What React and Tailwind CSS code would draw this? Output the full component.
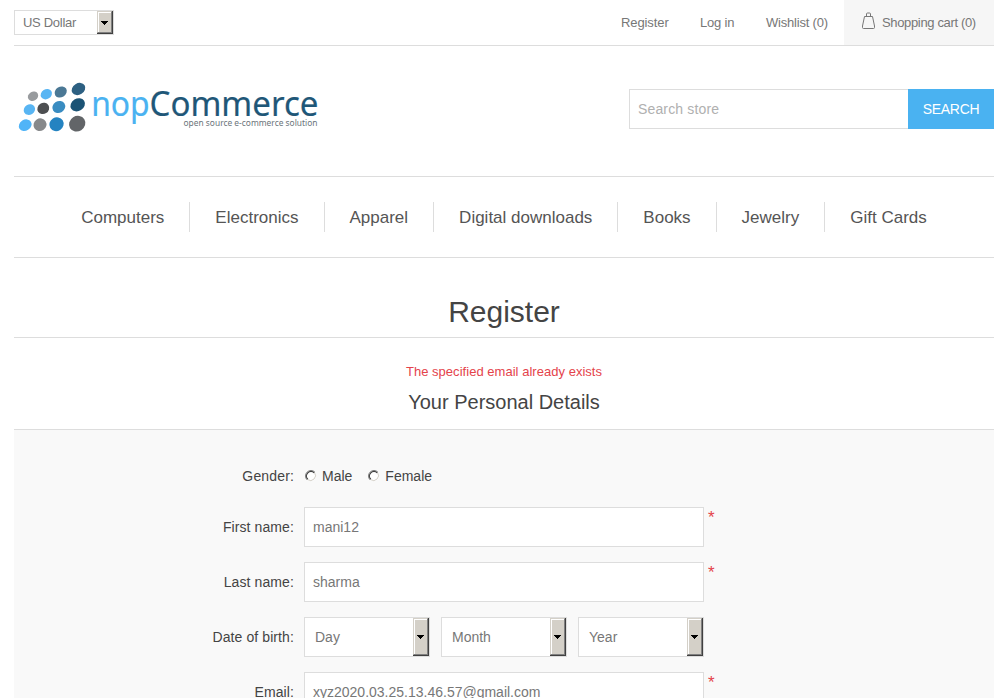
import React from 'react';

function ArrowButton() {
  return (
    <span className="flex w-[16px] shrink-0 items-center justify-center self-stretch border-b border-r border-[#404040]">
      <span className="flex h-full w-full items-center justify-center border border-b-[#808080] border-l-[#d4d0c8] border-r-[#808080] border-t-[#d4d0c8]">
        <span className="flex h-full w-full items-center border-l border-t border-white bg-[#d4d0c8] pl-[2px]">
          <svg width="7" height="4" viewBox="0 0 7 4" shapeRendering="crispEdges">
            <path d="M0 0h7v1H6v1H5v1H4v1H3V3H2V2H1V1H0z" fill="#000" />
          </svg>
        </span>
      </span>
    </span>
  );
}

function Select({ label, box, text }) {
  return (
    <div className={`flex items-center border border-[#ddd] bg-white text-[#777] ${box}`}>
      <span className={`flex-1 whitespace-nowrap ${text}`}>{label}</span>
      <ArrowButton />
    </div>
  );
}

const dots = [
  [33, 96.2, 5.4, 4.5, '#989b9e'],
  [46.3, 94.2, 5.9, 4.9, '#58b5f3'],
  [60.7, 92, 6.4, 5.2, '#4b7895'],
  [78.5, 89, 7.2, 5.7, '#2d6082'],
  [29.4, 109.6, 5.9, 5.1, '#58b5f3'],
  [43.3, 108.4, 6.1, 5.5, '#4d4f51'],
  [58.8, 107, 6.7, 5.8, '#398cc1'],
  [77.7, 104.8, 7.6, 6.2, '#1b5375'],
  [25.2, 125.2, 6.7, 5.5, '#50b4f7'],
  [40, 124.7, 6.6, 6.2, '#87898b'],
  [56.5, 124.2, 7.3, 6.8, '#2483c1'],
  [77.2, 123.7, 8.4, 7.6, '#626568'],
];

function Logo() {
  return (
    <svg className="mt-[34px] h-[60px] w-[310px]" viewBox="14 80 310 60">
      {dots.map(([x, y, rx, ry, c]) => (
        <ellipse key={`${x}`} cx={x} cy={y} rx={rx} ry={ry} fill={c} transform={`rotate(-32 ${x} ${y})`} />
      ))}
      <text x="91.2" y="116" fontSize="34" textLength="58.5" lengthAdjust="spacingAndGlyphs" fill="#4ab2f1" stroke="#4ab2f1" strokeWidth="0.2" fontFamily="'Noto Sans', sans-serif">nop</text>
      <text x="149.5" y="116" fontSize="34" textLength="169" lengthAdjust="spacingAndGlyphs" fill="#1f5778" stroke="#1f5778" strokeWidth="0.2" fontFamily="'Noto Sans', sans-serif">Commerce</text>
      <text x="183.5" y="126" fontSize="8.7" textLength="134" lengthAdjust="spacingAndGlyphs" fill="#6b747a" fontFamily="'Noto Sans', sans-serif">open source e-commerce solution</text>
    </svg>
  );
}

const nav = ['Computers', 'Electronics', 'Apparel', 'Digital downloads', 'Books', 'Jewelry', 'Gift Cards'];

function Row({ label, children, required }) {
  return (
    <div className="mb-[15px] flex h-10 items-center">
      <span className="mr-[10px] w-[280px] text-right tracking-[0.1px] text-[#444]">{label}</span>
      <div className="flex w-[400px] gap-[11px]">{children}</div>
      {required && <span className="ml-1 mt-px self-start text-[17px] leading-5 text-[#e4434b]">*</span>}
    </div>
  );
}

function Field({ value }) {
  return <div className="flex h-10 w-full items-center border border-[#ddd] bg-white px-2 text-[#777]">{value}</div>;
}

function Radio({ label }) {
  return (
    <span className="flex items-center">
      <svg className="mr-[5px]" width="12" height="12" viewBox="0 0 12 12">
        <circle cx="6" cy="6" r="5" fill="#fff" />
        <path d="M9.5 2.5A5 5 0 0 1 2.5 9.5" fill="none" stroke="#d4d0c8" />
        <path d="M2.1 9.9A5.5 5.5 0 0 1 9.9 2.1" fill="none" stroke="#808080" />
        <path d="M2.8 9.2A4.5 4.5 0 0 1 9.2 2.8" fill="none" stroke="#404040" strokeWidth="1.2" />
      </svg>
      {label}
    </span>
  );
}

export default function App() {
  return (
    <div className="h-[698px] overflow-hidden bg-white px-[14px] font-['Liberation_Sans',Arial,sans-serif] text-[14px] text-[#444]">
      <header>
        <div className="flex h-[46px] justify-between border-b border-[#ddd] text-[13px] leading-[45px] text-[#777]">
          <Select label="US Dollar" box="mt-[10px] h-[25px] w-[100px]" text="pl-2 leading-[23px] tracking-[-0.3px]" />
          <div className="flex">
            <span className="mr-8 w-[47px] whitespace-nowrap tracking-[-0.1px]">Register</span>
            <span className="mr-8 w-[34px] whitespace-nowrap tracking-[-0.2px]">Log in</span>
            <span className="mr-4 w-[62px] whitespace-nowrap tracking-[-0.2px]">Wishlist (0)</span>
            <span className="flex w-[150px] items-center whitespace-nowrap bg-[#f6f6f6] pl-[18px] tracking-[-0.35px]">
              <svg className="mr-[6px] -mt-[4px]" width="14" height="17" viewBox="0 0 14 17" fill="none" stroke="#777">
                <path d="M2.5 4.5h8l2 9.5v1.5q0 1-1 1h-10q-1 0-1-1V14zM4.5 4V2q0-1 1-1h2q1 0 1 1V4" />
              </svg>
              Shopping cart (0)
            </span>
          </div>
        </div>
        <div className="flex h-[131px] justify-between border-b border-[#ddd]">
          <Logo />
          <div className="mt-[43px] flex h-10 text-[14px]">
            <div className="flex w-[279px] items-center border border-r-0 border-[#ddd] px-2 tracking-[0.15px] text-[#b0b0b0]">Search store</div>
            <div className="flex w-[86px] items-center justify-center bg-[#4ab2f1] tracking-[-0.3px] text-white">SEARCH</div>
          </div>
        </div>
      </header>
      <nav className="flex h-[81px] items-center justify-center border-b border-[#ddd] text-[17px] text-[#555]">
        {nav.map((n, i) => (
          <span
            key={n}
            className={`h-[30px] whitespace-nowrap px-[25px] leading-[32px] ${i < nav.length - 1 ? 'border-r border-[#ddd]' : ''}`}
          >
            {n}
          </span>
        ))}
      </nav>
      <main className="text-center">
        <h1 className="flex h-20 items-end justify-center border-b border-[#ddd] pb-[7px] text-[30px] leading-9">Register</h1>
        <p className="mt-[24px] text-[13px] leading-5 tracking-[0.03px] text-[#e4434b]">The specified email already exists</p>
        <h2 className="mt-[5px] text-[20px] leading-[30px]">Your Personal Details</h2>
        <section className="mt-3 border-t border-[#ddd] bg-[#f9f9f9] pt-[26px]">
          <div className="mb-[11px] flex h-10 items-center">
            <span className="mr-[11px] w-[280px] text-right tracking-[0.15px]">Gender:</span>
            <div className="flex gap-4">
              <Radio label="Male" />
              <Radio label="Female" />
            </div>
          </div>
          <Row label="First name:" required><Field value="mani12" /></Row>
          <Row label="Last name:" required><Field value="sharma" /></Row>
          <Row label="Date of birth:">
            {['Day', 'Month', 'Year'].map((d) => (
              <Select key={d} label={d} box="h-10 w-[126px]" text="pl-[10px] text-left" />
            ))}
          </Row>
          <Row label="Email:" required><Field value="xyz2020.03.25.13.46.57@gmail.com" /></Row>
        </section>
      </main>
    </div>
  );
}
